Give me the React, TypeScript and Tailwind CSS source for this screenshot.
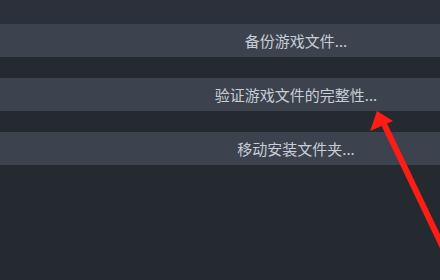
import React from "react";

const actions = ["备份游戏文件...", "验证游戏文件的完整性...", "移动安装文件夹..."];

const App: React.FC = () => {
  return (
    <div
      className="relative w-[440px] h-[280px] overflow-hidden bg-[#252930]"
      style={{ fontFamily: '"Noto Sans CJK SC", "Noto Sans", sans-serif' }}
    >
      <div className="h-[24px] bg-[#2c303a]" />
      <div className="w-[592px] flex flex-col gap-[21px]">
        {actions.map((label) => (
          <button
            key={label}
            className="h-[33px] w-full bg-[#3c424e] text-[#c9ced6] text-[15px] leading-none flex items-center justify-center"
          >
            {label}
          </button>
        ))}
      </div>

      {/* red annotation arrow */}
      <svg
        className="absolute left-0 top-0 pointer-events-none"
        width="440"
        height="280"
        viewBox="0 0 440 280"
      >
        <line
          x1="384"
          y1="124"
          x2="447"
          y2="256"
          stroke="#ff1c14"
          strokeWidth="6"
          strokeLinecap="round"
        />
        <polygon points="377,111 370,131 393,121" fill="#ff1c14" />
      </svg>
    </div>
  );
};

export default App;
